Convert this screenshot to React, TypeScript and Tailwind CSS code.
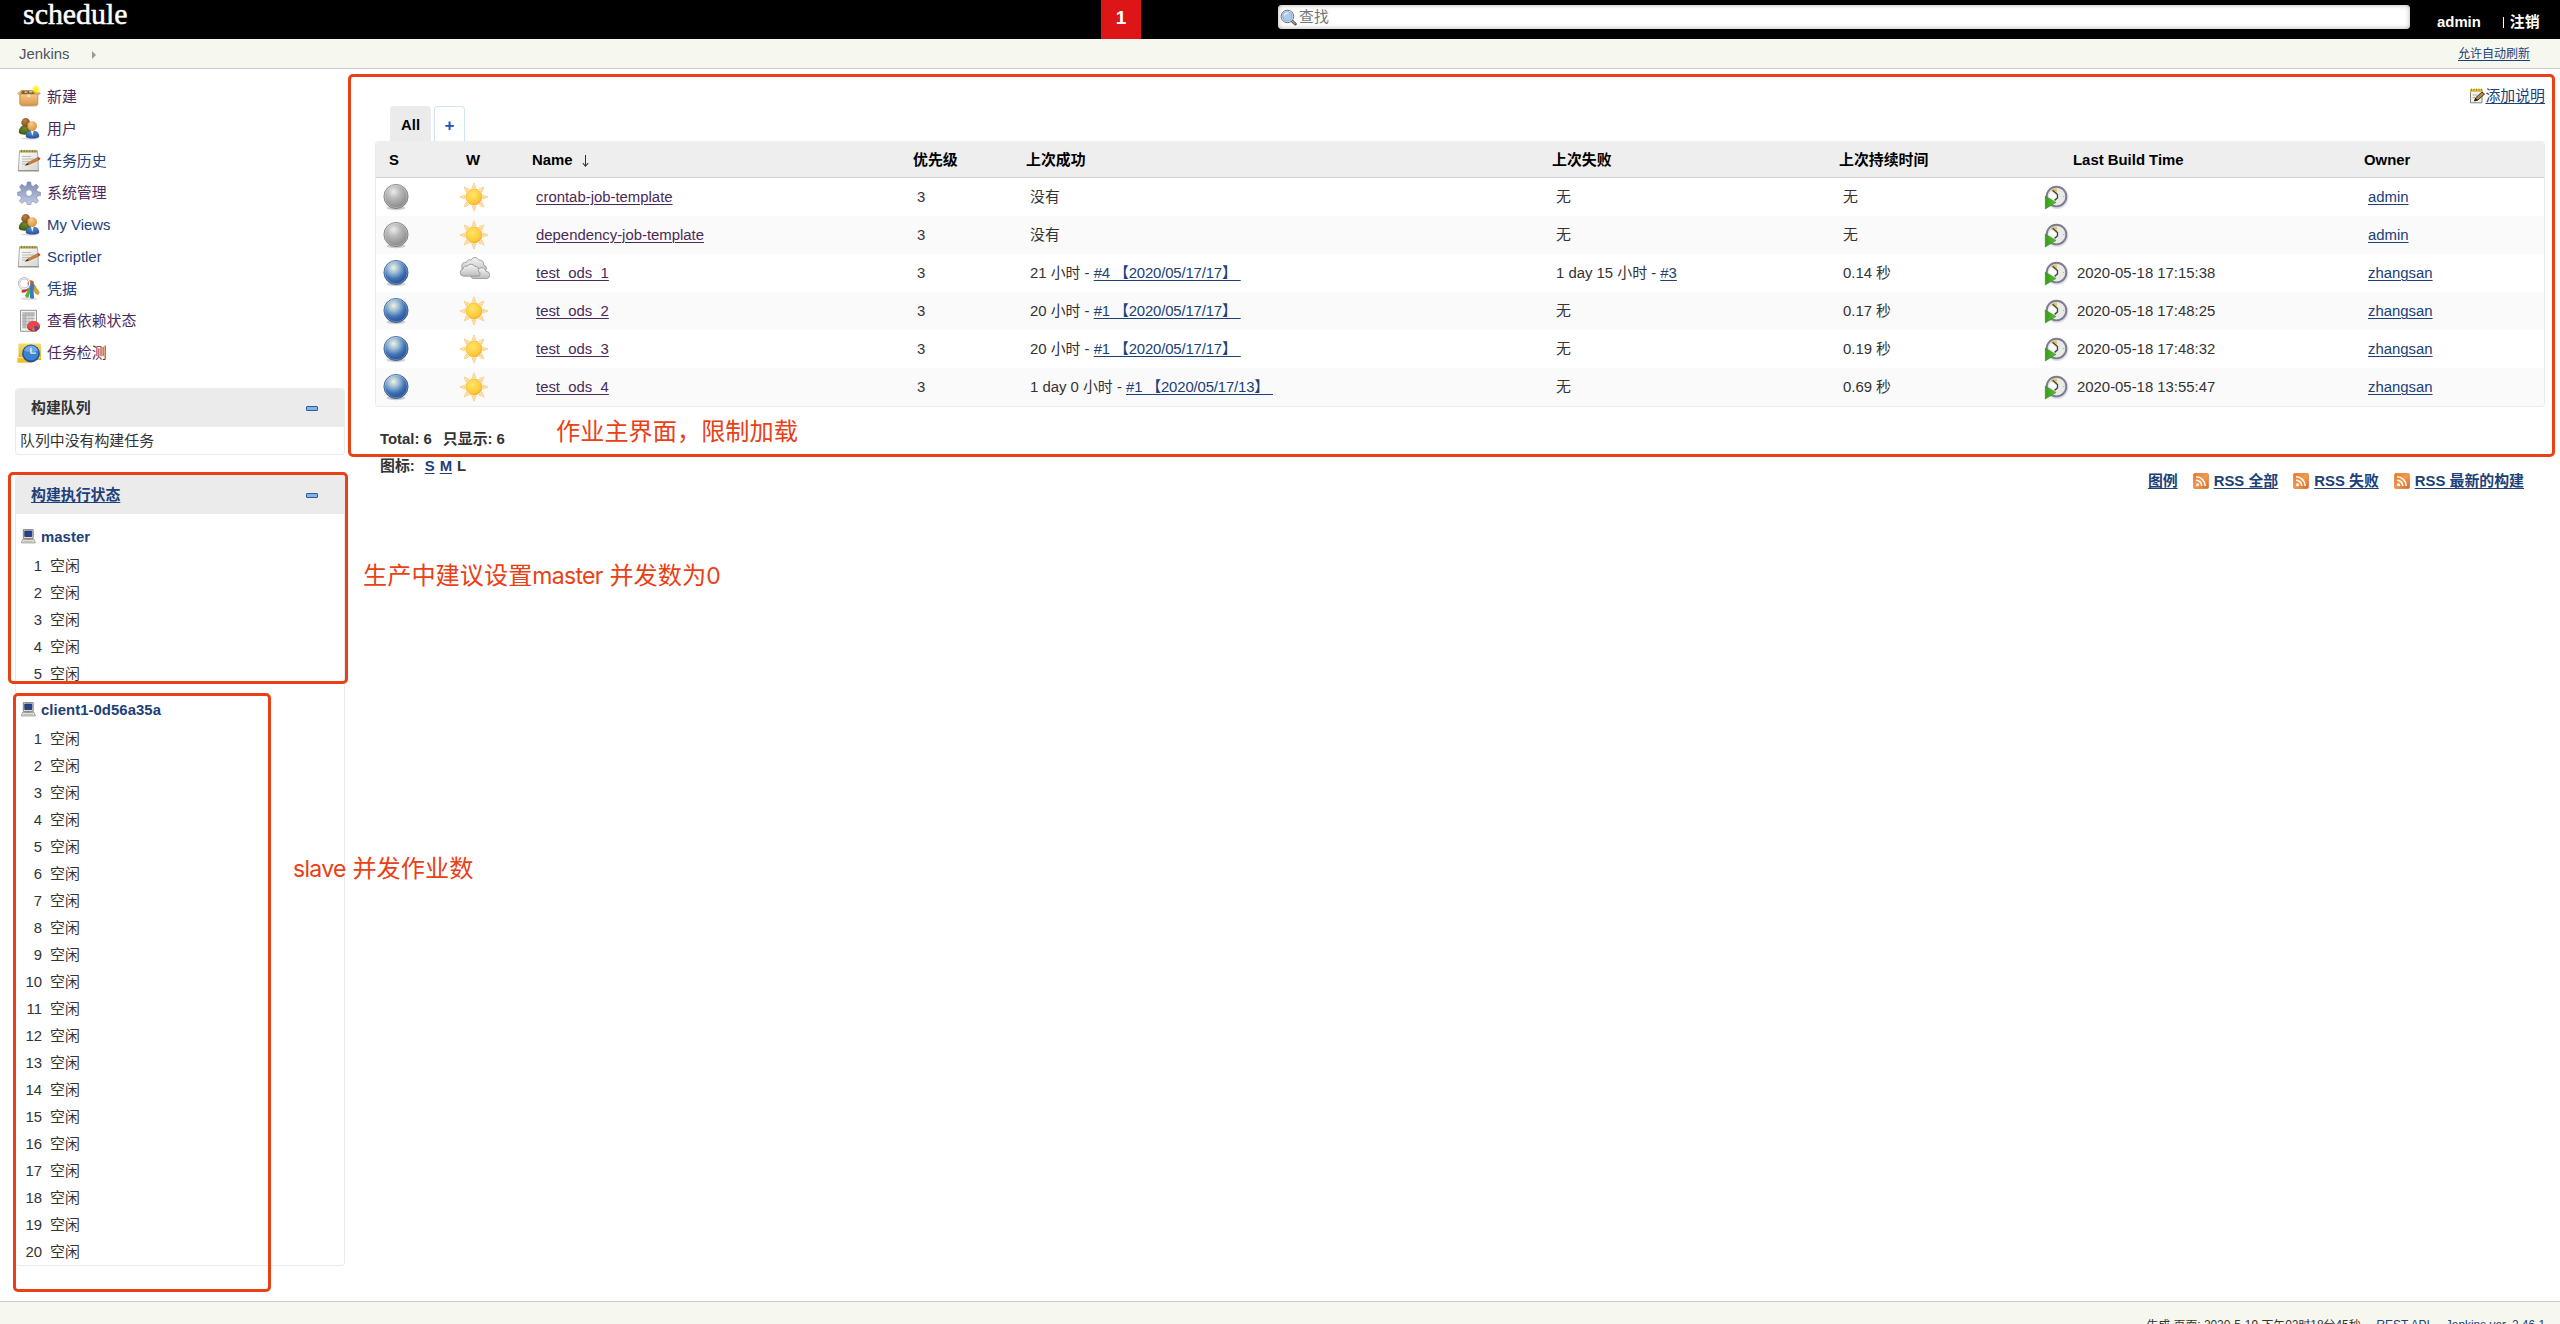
import React from "react";

type IconProps = { className?: string };

const Defs = () => (
  <svg className="absolute h-0 w-0" aria-hidden="true">
    <defs>
      <radialGradient id="blueBall" cx="0.4" cy="0.3" r="0.75">
        <stop offset="0" stopColor="#f2f4dc" />
        <stop offset="0.3" stopColor="#9dbcd6" />
        <stop offset="0.62" stopColor="#3f72b4" />
        <stop offset="1" stopColor="#1f4587" />
      </radialGradient>
      <radialGradient id="greyBall" cx="0.4" cy="0.3" r="0.75">
        <stop offset="0" stopColor="#ececec" />
        <stop offset="0.35" stopColor="#bcbcbc" />
        <stop offset="0.75" stopColor="#979797" />
        <stop offset="1" stopColor="#828282" />
      </radialGradient>
      <radialGradient id="sunCore" cx="0.4" cy="0.35" r="0.7">
        <stop offset="0" stopColor="#ffe66a" />
        <stop offset="0.7" stopColor="#fdcb3a" />
        <stop offset="1" stopColor="#f6ab2c" />
      </radialGradient>
      <linearGradient id="cloudFill" x1="0" y1="0" x2="0" y2="1">
        <stop offset="0" stopColor="#f6f6f6" />
        <stop offset="1" stopColor="#bdbdbd" />
      </linearGradient>
      <linearGradient id="boxFill" x1="0" y1="0" x2="0" y2="1">
        <stop offset="0" stopColor="#f3c98c" />
        <stop offset="1" stopColor="#d9984a" />
      </linearGradient>
      <linearGradient id="paper" x1="0" y1="0" x2="1" y2="1">
        <stop offset="0" stopColor="#ffffff" />
        <stop offset="1" stopColor="#d4d5d0" />
      </linearGradient>
      <linearGradient id="gearFill" x1="0" y1="0" x2="0" y2="1">
        <stop offset="0" stopColor="#7d8db4" />
        <stop offset="1" stopColor="#c3cae6" />
      </linearGradient>
      <radialGradient id="greenBody" cx="0.5" cy="0.3" r="0.8">
        <stop offset="0" stopColor="#6f8a2c" />
        <stop offset="1" stopColor="#38510e" />
      </radialGradient>
      <radialGradient id="blueBody" cx="0.5" cy="0.2" r="0.9">
        <stop offset="0" stopColor="#5b8ed0" />
        <stop offset="1" stopColor="#1f4a90" />
      </radialGradient>
      <radialGradient id="brownHead" cx="0.4" cy="0.3" r="0.8">
        <stop offset="0" stopColor="#b98346" />
        <stop offset="1" stopColor="#6f4512" />
      </radialGradient>
      <radialGradient id="tanHead" cx="0.4" cy="0.3" r="0.8">
        <stop offset="0" stopColor="#fbc98a" />
        <stop offset="1" stopColor="#d98a33" />
      </radialGradient>
      <linearGradient id="folderFill" x1="0" y1="0" x2="0" y2="1">
        <stop offset="0" stopColor="#f6dc6c" />
        <stop offset="1" stopColor="#e3a91f" />
      </linearGradient>
      <linearGradient id="rssFill" x1="0" y1="0" x2="1" y2="1">
        <stop offset="0" stopColor="#e9722a" />
        <stop offset="0.5" stopColor="#f49a4e" />
        <stop offset="1" stopColor="#d9661f" />
      </linearGradient>
      <linearGradient id="greenArrow" x1="0" y1="0" x2="1" y2="0">
        <stop offset="0" stopColor="#3a9a1c" />
        <stop offset="1" stopColor="#58c232" />
      </linearGradient>
    </defs>
  </svg>
);

const BoxIcon = ({ className }: IconProps) => (
  <svg viewBox="0 0 24 24" className={className}>
    <ellipse cx="12" cy="21" rx="9" ry="1" fill="#000" opacity="0.15" />
    <path d="M4.500 5.500h14.500L20.500 9H3Z" fill="#9a6e38" stroke="#c48a45" strokeWidth="0.800" />
    <path d="M6.200 6.300h11l1 2.700h-13z" fill="#67502f" />
    <path d="M7.500 7.200h3M12 6.800h3" stroke="#f0e4c8" strokeWidth="1.200" />
    <path d="M4.500 5.500.5 8.200l1.200 1.300L3.500 9z" fill="#f3c88b" stroke="#c48a45" strokeWidth="0.500" />
    <path d="M19 5.500l4.300 2.700-1.200 1.300L20 9z" fill="#e2a65c" stroke="#c48a45" strokeWidth="0.500" />
    <path d="M2.800 9h18v9.500q0 1.800-1.800 1.800H4.600q-1.800 0-1.800-1.800z" fill="url(#boxFill)" stroke="#c08140" strokeWidth="0.800" />
    <path d="M10.300 9.300h3v2.700h-3z" fill="#f8dfb4" />
    <circle cx="19" cy="4.500" r="4.400" fill="#f8f25a" opacity="0.550" />
    <circle cx="19" cy="4.500" r="2.500" fill="#fdf020" />
  </svg>
);

const UsersIcon = ({ className }: IconProps) => (
  <svg viewBox="0 0 24 24" className={className}>
    <ellipse cx="13" cy="21.500" rx="9" ry="1.200" fill="#000" opacity="0.150" />
    <path d="M1.800 15.500c0-4.300 2-6.700 6-7.200 4 0 6 2.600 6 7.200-1.500 3-10.500 3-12 0z" fill="url(#greenBody)" />
    <circle cx="8.700" cy="5.500" r="4.400" fill="url(#brownHead)" />
    <path d="M8.800 19.500c0-4 1.800-6 6.400-6s7 2 7 6c-1.200 2.700-12.200 2.700-13.400 0z" fill="url(#blueBody)" />
    <path d="M14 13.800l1.300 5.200 1.300-5.200z" fill="#fff" />
    <circle cx="15.200" cy="9" r="4.800" fill="url(#tanHead)" />
  </svg>
);

const NotepadIcon = ({ className }: IconProps) => (
  <svg viewBox="0 0 24 24" className={className}>
    <path d="M2.500 2.500h18l1 19.200H1.300z" fill="url(#paper)" stroke="#9b9c96" strokeWidth="0.800" />
    <path d="M1.300 21.900h20.300" stroke="#7c7c78" strokeWidth="0.900" />
    <path d="M2.500 1.200h18v2.300h-18z" fill="#b3a552" />
    <path d="M4.500.8v2.500M7.200.8v2.500M9.900.8v2.500M12.600.8v2.500M15.300.8v2.500M18 .8v2.500" stroke="#7d7230" strokeWidth="0.800" />
    <path d="M5 7.500h9M5 10h12M5 12.500h7M5 15h4" stroke="#b5b6b2" strokeWidth="0.900" />
    <path d="M8.500 16.200l2.400-2.500 9.700-5q1.800-.6 2.300.8 0 1-1 1.600l-9.700 4.400z" fill="#d08036" stroke="#8b5322" strokeWidth="0.500" />
    <path d="M8 16.500l2.600-2.700 1.200 1.900z" fill="#4b3a20" />
    <path d="M20.500 8.700q1.800-.6 2.300.8 0 1-1 1.600z" fill="#c23c34" />
  </svg>
);

const GearIcon = ({ className }: IconProps) => (
  <svg viewBox="0 0 24 24" className={className}>
    <g fill="url(#gearFill)" stroke="#7684ae" strokeWidth="0.600" strokeLinejoin="round">
      <path
        fillRule="evenodd"
        d="M10.300 1h3.400l.6 3.600 1.900.8 3-2.100 2.400 2.400-2.100 3 .8 1.900 3.200.6v3.200l-3.300.7-.7 1.900 2 2.900-2.300 2.400-3-2-1.900.8-.6 2.500h-3.400l-.6-2.700-1.900-.8-3 2.200-2.400-2.400 2.100-3-.8-1.800L.6 14.400v-3.200l3.100-.6.8-1.900-2-3 2.300-2.400 3 2.100 1.900-.8zM12 8.800a3.300 3.300 0 1 0 0 6.600 3.300 3.300 0 0 0 0-6.600z"
      />
    </g>
  </svg>
);

const KeysIcon = ({ className }: IconProps) => (
  <svg viewBox="0 0 24 24" className={className}>
    <ellipse cx="12" cy="21.800" rx="9" ry="1.500" fill="#000" opacity="0.120" />
    <path d="M12 9.500l-7.500 4 .3 2.300 3-.3L13 12z" fill="#d6322c" />
    <path d="M13 7c2-2 4-1 5 1l4.800 7.500-1.600 2.500-2.700-1-5-8z" fill="#c9a63a" />
    <path d="M10.500 5.500c2-3.500 6-2.500 6.500.5l-1.500 2-4.500 1z" fill="#d8552c" />
    <path d="M12 10.500l-3.800 8 1 2.300 2.300-.3 2.500-8z" fill="#51b53a" />
    <path d="M12 7.500c1.500-1.800 5-1 5.500 1.300l-1 5 .7 7.200-2 1-2.300-1.300.2-6.500z" fill="#3f79bd" />
    <circle cx="7.300" cy="6.500" r="5.300" fill="none" stroke="#999" strokeWidth="2" />
    <circle cx="7.300" cy="6.500" r="5.300" fill="none" stroke="#f6f6f6" strokeWidth="1.100" />
  </svg>
);

const ReportIcon = ({ className }: IconProps) => (
  <svg viewBox="0 0 24 24" className={className}>
    <path d="M3.500 1.300h16v21h-16z" fill="#f3f3f1" stroke="#8c8d89" strokeWidth="0.900" />
    <path d="M5.300 3.300h12.500v16H5.300z" fill="#dfe0de" />
    <path d="M5.300 3.300h3.700v16H5.300zM5.300 3.300h12.500v3H5.300z" fill="#bbbcba" />
    <path d="M5.300 9.500h12.500M5.300 12.500h12.500M5.300 15.500h12.500M12 3.300v16M15 3.300v16M9 3.300v16M5.300 6.500h12.500" stroke="#a3a4a1" strokeWidth="0.600" />
    <ellipse cx="16.500" cy="17.600" rx="6.500" ry="4.900" fill="#b91f25" />
    <ellipse cx="16.500" cy="16.500" rx="6.300" ry="4.400" fill="#e8474a" />
    <path d="M17 17.500l2-.7 2.500 1.500-1 2.900-2.500 1z" fill="#58479b" />
    <path d="M17 17.500l-2 3.500 2.500 1.200z" fill="#a9a13a" />
  </svg>
);

const FolderClockIcon = ({ className }: IconProps) => (
  <svg viewBox="0 0 24 24" className={className}>
    <path d="M1.500 3.500q0-1 1-1H23q1 0 1 1V19H1.500z" fill="url(#folderFill)" />
    <path d="M.3 17h11l3 4.800H.3z" fill="#f4c024" />
    <path d="M.5 16.500h23" stroke="#fbe89a" strokeWidth="1.200" />
    <circle cx="14" cy="12.500" r="8.900" fill="#1d549f" />
    <circle cx="14" cy="12" r="7.500" fill="#3c82d0" />
    <path d="M7 9.500a7.500 7.500 0 0 1 14 0q-7 3-14 0z" fill="#86b8ea" opacity="0.700" />
    <path d="M14 6.800v5.400h5" fill="none" stroke="#eaf4ff" strokeWidth="1.300" />
  </svg>
);

const ComputerIcon = ({ className }: IconProps) => (
  <svg viewBox="0 0 16 16" className={className}>
    <path d="M2.500.7h10.500v9.300H2.500z" fill="#e9e8e2" stroke="#6d6c66" strokeWidth="0.900" />
    <path d="M4 2.200h7.500v5.800H4z" fill="#27418c" stroke="#15265c" strokeWidth="0.800" />
    <path d="M5 10h5.500v1.500H5z" fill="#8a8982" />
    <path d="M1.500 11.300h12.500l1.300 3.500H.5z" fill="#efeee8" stroke="#85847d" strokeWidth="0.800" />
    <path d="M2.500 13.200h10.500" stroke="#b0afa8" strokeWidth="0.900" />
  </svg>
);

const BallIcon = ({ color, className }: IconProps & { color: "grey" | "blue" }) => (
  <svg viewBox="0 0 28 28" className={className}>
    <ellipse cx="14" cy="25" rx="9.500" ry="2.200" fill="#000" opacity="0.180" />
    <circle cx="14" cy="13.500" r="12.100" fill={color === "blue" ? "url(#blueBall)" : "url(#greyBall)"} stroke={color === "blue" ? "#2b4f8c" : "#6f6f6f"} strokeWidth="0.700" />
    <circle cx="14" cy="13.500" r="11.200" fill="none" stroke="#fff" strokeWidth="0.700" opacity="0.400" />
  </svg>
);

const SUN_ANGLES = [0, 45, 90, 135, 180, 225, 270, 315];
const SunIcon = ({ className }: IconProps) => (
  <svg viewBox="0 0 30 30" className={className}>
    {SUN_ANGLES.map((a) => (
      <path key={a} d="M13 5.800 15 .8l2 5z" fill="#fee3a4" stroke="#f6c478" strokeWidth="0.600" transform={`rotate(${a} 15 15)`} />
    ))}
    <circle cx="15" cy="15" r="8.200" fill="url(#sunCore)" stroke="#f3b347" strokeWidth="0.600" />
  </svg>
);

const CloudIcon = ({ className }: IconProps) => (
  <svg viewBox="0 0 32 24" className={className}>
    <g fill="url(#cloudFill)" stroke="#8c8c8c" strokeWidth="0.800">
      <path d="M6.500 14a4 4 0 0 1 1-8.500 4 4 0 0 1 5-2.300 4.300 4.300 0 0 1 8 0 4.300 4.300 0 0 1 5 5A4 4 0 0 1 25 16z" />
      <path d="M14 22.500a3.500 3.500 0 0 1 1.500-6.500 4 4 0 0 1 5.500-4 4.500 4.500 0 0 1 7 3 3.800 3.800 0 0 1 1 7.500z" />
      <path d="M4.500 20a3.800 3.800 0 0 1-.5-7.500 3.700 3.700 0 0 1 4.500-2.900 4.300 4.300 0 0 1 7.500.2 3.700 3.700 0 0 1 4 5.200 2.500 2.500 0 0 1-1.500 5z" />
    </g>
  </svg>
);

const ScheduleIcon = ({ className }: IconProps) => (
  <svg viewBox="0 0 26 26" className={className}>
    <circle cx="13.500" cy="13" r="12" fill="#c8c8d4" opacity="0.500" />
    <circle cx="13" cy="12" r="10.200" fill="#e9e9e6" stroke="#7c7c94" strokeWidth="2" />
    <path d="M13.500 9V3a9.200 9.200 0 0 0-6.700 3z" fill="#e2c873" />
    <path d="M9 5.500l5 4.500v3.500L11 16" fill="none" stroke="#444" strokeWidth="1.400" />
    <path d="M7.500 7l5.800 4.500-3.300 4L5 11.500z" fill="#fff" />
    <circle cx="20.500" cy="12" r="0.600" fill="#999" />
    <path d="M1.300 11.500 12.500 18.200 1.300 25z" fill="url(#greenArrow)" stroke="#2f8516" strokeWidth="0.500" />
  </svg>
);

const RssIcon = ({ className }: IconProps) => (
  <svg viewBox="0 0 16 16" className={className}>
    <rect x="0.300" y="0.300" width="15.400" height="15.400" rx="2" fill="url(#rssFill)" stroke="#d9702c" strokeWidth="0.500" />
    <circle cx="4.500" cy="11.700" r="1.500" fill="#fff" />
    <path d="M3 7.200a5.800 5.800 0 0 1 5.800 5.800M3 3.800A9.200 9.200 0 0 1 12.200 13" fill="none" stroke="#fff" strokeWidth="1.600" />
  </svg>
);

const SmallNoteIcon = ({ className }: IconProps) => (
  <svg viewBox="0 0 16 16" className={className}>
    <path d="M1.500 2h11.500v12.800H1.500z" fill="#f2f2ec" stroke="#77776f" strokeWidth="0.900" />
    <path d="M1 1h12.500v3H1z" fill="#e8c542" />
    <path d="M2.500 0.500v2.500M5 .5v2.500M7.500.5v2.500M10 .5v2.500M12.300.5v2.500" stroke="#8a6c14" strokeWidth="0.700" />
    <path d="M3.500 7h5M3.500 9.500h3" stroke="#aaa" strokeWidth="0.900" />
    <path d="M5.500 13l1-3 6.500-6 2.500 2L9 12z" fill="#b48a4a" stroke="#2d2416" strokeWidth="0.900" />
    <path d="M5.500 13l1-3L9 12z" fill="#1c1c1c" />
  </svg>
);

const SearchIcon = ({ className }: IconProps) => (
  <svg viewBox="0 0 16 16" className={className}>
    <path d="M10.800 10.800l3.600 3.300" stroke="#555" strokeWidth="2.800" strokeLinecap="round" />
    <path d="M11.500 11.500l2.600 2.300" stroke="#aaa" strokeWidth="1" strokeLinecap="round" />
    <circle cx="7" cy="7" r="5.900" fill="#fff" stroke="#5f6672" strokeWidth="0.900" />
    <circle cx="7" cy="7" r="4.500" fill="#a9cbee" stroke="#7d9cc4" strokeWidth="0.900" />
    <path d="M4 6.300a3.200 3.200 0 0 1 4-2.500" fill="none" stroke="#e8f3ff" strokeWidth="1.300" />
  </svg>
);

const Minus = () => <span className="mt-px h-[5px] w-3 rounded-[1px] border border-[#2c5a9c] bg-[#86b2ec]" />;

const VISITED = "text-[#4b2a59]";
const LINK = "text-[#204078]";

const TASKS = [
  { icon: BoxIcon, label: "新建", color: VISITED },
  { icon: UsersIcon, label: "用户", color: VISITED },
  { icon: NotepadIcon, label: "任务历史", color: LINK },
  { icon: GearIcon, label: "系统管理", color: VISITED },
  { icon: UsersIcon, label: "My Views", color: LINK },
  { icon: NotepadIcon, label: "Scriptler", color: LINK },
  { icon: KeysIcon, label: "凭据", color: LINK },
  { icon: ReportIcon, label: "查看依赖状态", color: VISITED },
  { icon: FolderClockIcon, label: "任务检测", color: VISITED },
];

type Job = {
  ball: "grey" | "blue";
  cloudy?: boolean;
  name: string;
  success: string;
  successLink?: string;
  failure: string;
  failureLink?: string;
  duration: string;
  time: string;
  owner: string;
};

const JOBS: Job[] = [
  { ball: "grey", name: "crontab-job-template", success: "没有", failure: "无", duration: "无", time: "", owner: "admin" },
  { ball: "grey", name: "dependency-job-template", success: "没有", failure: "无", duration: "无", time: "", owner: "admin" },
  { ball: "blue", cloudy: true, name: "test_ods_1", success: "21 小时 - ", successLink: "#4 【2020/05/17/17】 ", failure: "1 day 15 小时 - ", failureLink: "#3", duration: "0.14 秒", time: "2020-05-18 17:15:38", owner: "zhangsan" },
  { ball: "blue", name: "test_ods_2", success: "20 小时 - ", successLink: "#1 【2020/05/17/17】 ", failure: "无", duration: "0.17 秒", time: "2020-05-18 17:48:25", owner: "zhangsan" },
  { ball: "blue", name: "test_ods_3", success: "20 小时 - ", successLink: "#1 【2020/05/17/17】 ", failure: "无", duration: "0.19 秒", time: "2020-05-18 17:48:32", owner: "zhangsan" },
  { ball: "blue", name: "test_ods_4", success: "1 day 0 小时 - ", successLink: "#1 【2020/05/17/13】 ", failure: "无", duration: "0.69 秒", time: "2020-05-18 13:55:47", owner: "zhangsan" },
];

const GRID = "grid grid-cols-[79px_77px_381px_113px_526px_287px_201px_33px_291px_1fr] items-center";
const UNDERLINE = "underline underline-offset-2 decoration-1";

const Executors = ({ node, count }: { node: string; count: number }) => (
  <div>
    <div className={`flex h-[31px] items-center pl-[5px] font-bold tracking-[0.050px] ${LINK}`}>
      <ComputerIcon className="mr-[5px] size-[15px]" />
      {node}
    </div>
    {Array.from({ length: count }, (_, i) => (
      <div key={i} className="flex h-[27px] items-center">
        <span className="w-[26px] text-right">{i + 1}</span>
        <span className="pl-2">空闲</span>
      </div>
    ))}
  </div>
);

const PaneHeader = ({ children }: { children: React.ReactNode }) => (
  <div className="flex h-[39px] items-center justify-between rounded-t-[4px] bg-[#ebebeb] pr-[26px] pl-[15px] font-bold">
    {children}
    <Minus />
  </div>
);

const JobRow = ({ job }: { job: Job }) => (
  <div className={`${GRID} h-[38px] odd:bg-white even:bg-[#fafafa]`}>
    <BallIcon color={job.ball} className="ml-[6px] size-[28px]" />
    {job.cloudy ? <CloudIcon className="ml-1 -mt-[9px] h-[23px] w-[31px]" /> : <SunIcon className="ml-1 size-[30px]" />}
    <span className="pl-1"><a className={`${VISITED} ${UNDERLINE}`}>{job.name}</a></span>
    <span className="pl-1">3</span>
    <span className="whitespace-pre pl-1">
      {job.success}
      {job.successLink && <a className={`tracking-[-0.150px] ${LINK} ${UNDERLINE}`}>{job.successLink}</a>}
    </span>
    <span className="whitespace-pre pl-1">
      {job.failure}
      {job.failureLink && <a className={`${LINK} ${UNDERLINE}`}>{job.failureLink}</a>}
    </span>
    <span className="pl-1">{job.duration}</span>
    <ScheduleIcon className="ml-1 size-[25px]" />
    <span className="pl-1">{job.time}</span>
    <span className="pl-1"><a className={`${LINK} ${UNDERLINE}`}>{job.owner}</a></span>
  </div>
);

const RssLink = ({ children }: { children: React.ReactNode }) => (
  <span className="flex items-center gap-[5px]">
    <RssIcon className="size-4" />
    <a className={UNDERLINE}>{children}</a>
  </span>
);

export default function App() {
  return (
    <div className="relative flex h-[1324px] w-[2560px] flex-col overflow-hidden bg-white font-['Liberation_Sans','Noto_Sans_CJK_SC',sans-serif] text-[14.9px] leading-5 text-[#333]">
      <Defs />

      <header className="flex h-[39px] shrink-0 bg-black text-white">
        <div className="w-[1101px] pl-[23px] font-['Liberation_Serif',serif] text-[29.900px] leading-[28px] [-webkit-text-stroke:0.500px_white]">
          schedule
        </div>
        <div className="flex w-10 items-center justify-center bg-[#dd1517] pb-[3px] text-[19px] font-bold">1</div>
        <div className="mt-[5px] ml-[137px] flex h-6 w-[1132px] items-center rounded-[4px] bg-white pl-[2px] text-[#757575] shadow-[inset_0_0_5px_#aaa]">
          <SearchIcon className="mr-[2px] size-[17px]" />
          查找
        </div>
        <div className="flex items-center pt-[5px] pl-[27px] font-bold">
          <span>admin</span>
          <span className="ml-[22px] h-[11px] w-px bg-white" />
          <span className="ml-[6px]">注销</span>
        </div>
      </header>

      <nav className="flex h-[30px] shrink-0 items-center justify-between border-b border-[#ccc] bg-[#f6f8ef] pr-[30px] pl-[19px]">
        <div className="flex items-center text-[#4d545d]">
          Jenkins
          <svg viewBox="0 0 4 8" className="mt-[2px] ml-[22px] h-[8px] w-1"><path d="M0 0l4 4-4 4z" fill="#999" /></svg>
        </div>
        <a className={`text-xs ${LINK} ${UNDERLINE}`}>允许自动刷新</a>
      </nav>

      <div className="flex h-[1232px] shrink-0">
        <aside className="w-[375px] shrink-0 pt-3 pl-[15px]">
          <ul>
            {TASKS.map(({ icon: Icon, label, color }) => (
              <li key={label} className={`flex h-8 items-center pl-[2px] ${color}`}>
                <Icon className="mr-[6px] size-[24px]" />
                {label}
              </li>
            ))}
          </ul>
          <section className="mt-[19px] h-[67px] w-[330px] rounded-[4px] border border-t-0 border-[#ebebeb]">
            <PaneHeader>构建队列</PaneHeader>
            <div className="flex h-7 items-center pl-1">队列中没有构建任务</div>
          </section>
          <section className="mt-5 h-[791px] w-[330px] rounded-[4px] border border-t-0 border-[#ebebeb]">
            <PaneHeader><a className={`${LINK} ${UNDERLINE}`}>构建执行状态</a></PaneHeader>
            <div className="flex flex-col gap-[7px] pt-[7px]">
              <Executors node="master" count={5} />
              <Executors node="client1-0d56a35a" count={20} />
            </div>
          </section>
        </aside>

        <main className="w-[2170px] pt-4">
          <div className={`flex h-[21px] items-center justify-end ${LINK}`}>
            <SmallNoteIcon className="mt-px size-4" />
            <a className={UNDERLINE}>添加说明</a>
          </div>
          <div className="flex gap-[3px] pl-[15px] font-bold">
            <div className="flex h-[35px] w-[41px] items-center justify-center rounded-t-[4px] bg-[#ebebeb] pt-[3px] text-black">All</div>
            <div className="flex h-[35px] w-[31px] items-center justify-center rounded-t-[4px] border border-b-0 border-[#cfe3f5] pt-[3px] text-[17px] text-[#1a57b5]">+</div>
          </div>
          <div className="overflow-hidden rounded-[4px] border border-t-0 border-[#ebebeb]">
            <div className={`${GRID} h-[37px] border-b border-[#d0d0d0] bg-[#eee] pt-[2px] font-bold text-black`}>
              <span className="pl-[13px]">S</span>
              <span className="pl-[11px]">W</span>
              <span className="flex items-center">
                Name
                <svg viewBox="0 0 8 14" className="ml-[9px] mt-[2px] h-[14px] w-[7px]"><path d="M4 0v13M1 9.500 4 13l3-3.500" fill="none" stroke="#333" strokeWidth="1.200" /></svg>
              </span>
              <span>优先级</span>
              <span>上次成功</span>
              <span>上次失败</span>
              <span>上次持续时间</span>
              <span />
              <span>Last Build Time</span>
              <span>Owner</span>
            </div>
            <div>
              {JOBS.map((job) => <JobRow key={job.name} job={job} />)}
            </div>
          </div>
          <div className="flex justify-between pl-[5px] font-bold">
            <div className="pt-[22px]">
              <div className="flex h-[27px] gap-[11px]">
                <span>Total: 6</span>
                <span>只显示: 6</span>
              </div>
              <div className="flex gap-[5px]">
                <span className="mr-[5px]">图标:</span>
                <a className={`${LINK} ${UNDERLINE}`}>S</a>
                <a className={`${LINK} ${UNDERLINE}`}>M</a>
                <span>L</span>
              </div>
            </div>
            <div className={`flex gap-[15px] pt-[64px] pr-[21px] ${LINK}`}>
              <a className={UNDERLINE}>图例</a>
              <RssLink>RSS 全部</RssLink>
              <RssLink>RSS 失败</RssLink>
              <RssLink>RSS 最新的构建</RssLink>
            </div>
          </div>
        </main>
      </div>

      <footer className="flex h-[60px] shrink-0 justify-end gap-4 border-t border-[#ccc] bg-[#f6f8ef] pt-[13px] pr-[15px] text-[11.900px]">
        <span>生成 页面: 2020-5-19 下午02时18分45秒</span>
        <a className={LINK}>REST API</a>
        <a className={LINK}>Jenkins ver. 2.46.1</a>
      </footer>

      {/* Annotations drawn over the page */}
      <div className="absolute top-[74px] left-[348px] h-[383px] w-[2207px] rounded-[5px] border-3 border-[#ea4015]" />
      <div className="absolute top-[472px] left-[8px] h-[212px] w-[340px] rounded-[5px] border-3 border-[#ea4015]" />
      <div className="absolute top-[693px] left-[13px] h-[599px] w-[258px] rounded-[5px] border-3 border-[#ea4015]" />
      <div className="absolute top-[416px] left-[556px] text-[24.200px] leading-8 text-[#ea4015]">作业主界面，限制加载</div>
      <div className="absolute top-[560px] left-[363px] text-[24.200px] leading-8 text-[#ea4015]">生产中建议设置<span className="font-[Inter] text-[23px] tracking-[-0.700px]">master</span> 并发数为<span className="font-[Inter] text-[23px]">0</span></div>
      <div className="absolute top-[853px] left-[293px] text-[24.200px] leading-8 text-[#ea4015]"><span className="font-[Inter] text-[23px] tracking-[-0.700px]">slave</span> 并发作业数</div>
    </div>
  );
}
